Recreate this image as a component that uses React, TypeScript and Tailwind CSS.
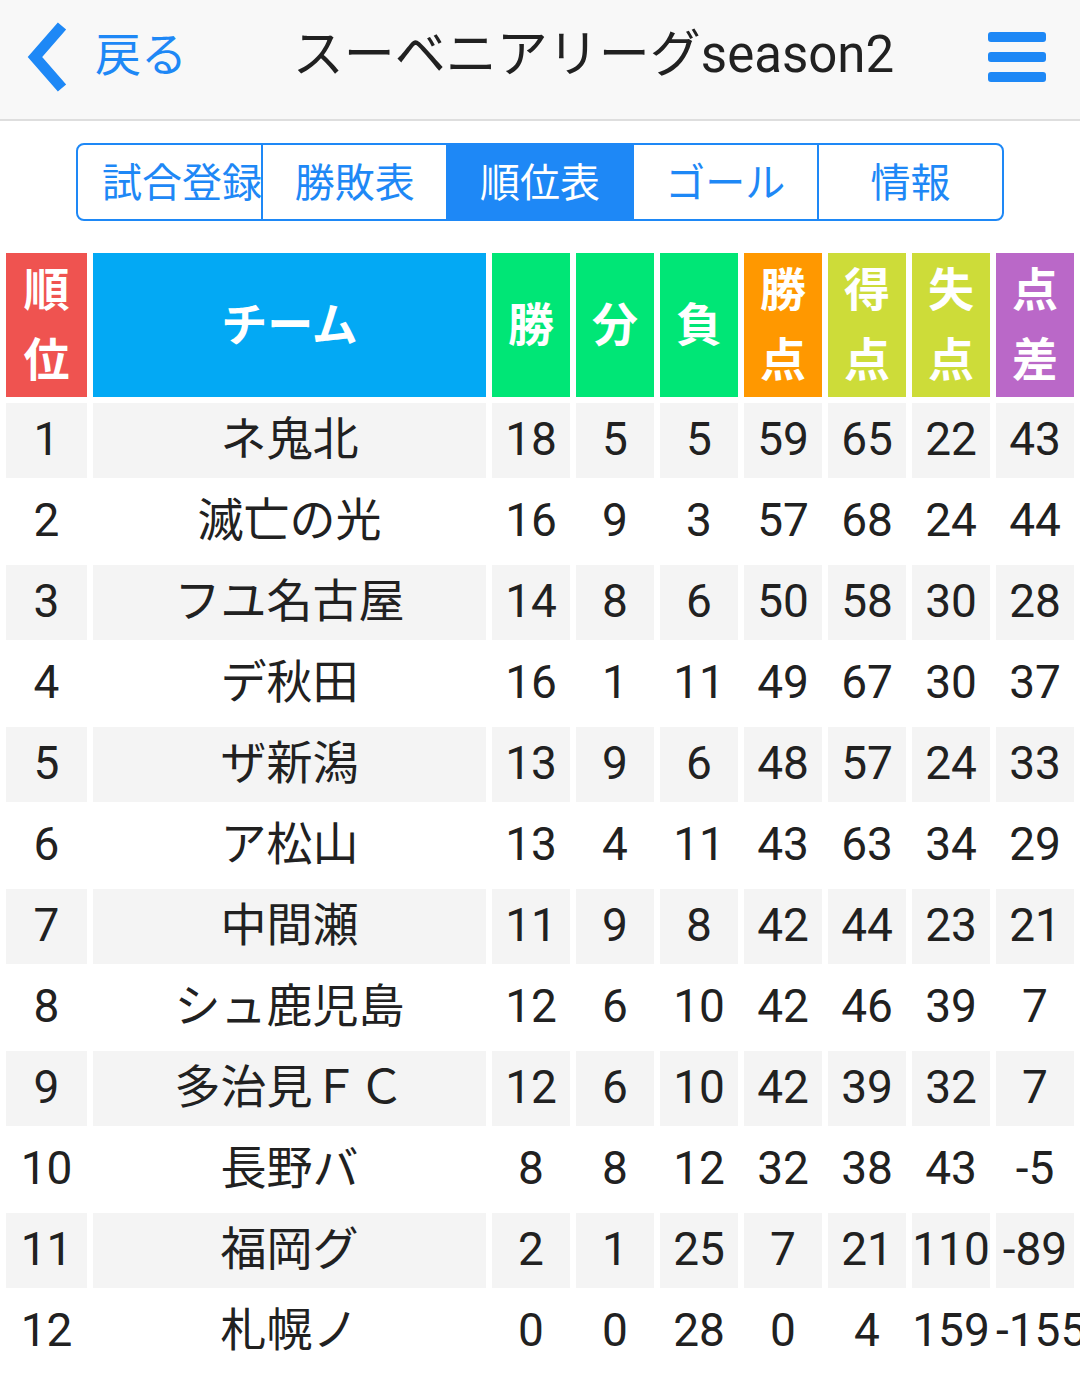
import React from "react";

const rows: [number, string, string, string, string, string, string, string, string][] = [
  [1, "ネ鬼北", "18", "5", "5", "59", "65", "22", "43"],
  [2, "滅亡の光", "16", "9", "3", "57", "68", "24", "44"],
  [3, "フユ名古屋", "14", "8", "6", "50", "58", "30", "28"],
  [4, "デ秋田", "16", "1", "11", "49", "67", "30", "37"],
  [5, "ザ新潟", "13", "9", "6", "48", "57", "24", "33"],
  [6, "ア松山", "13", "4", "11", "43", "63", "34", "29"],
  [7, "中間瀬", "11", "9", "8", "42", "44", "23", "21"],
  [8, "シュ鹿児島", "12", "6", "10", "42", "46", "39", "7"],
  [9, "多治見ＦＣ", "12", "6", "10", "42", "39", "32", "7"],
  [10, "長野バ", "8", "8", "12", "32", "38", "43", "-5"],
  [11, "福岡グ", "2", "1", "25", "7", "21", "110", "-89"],
  [12, "札幌ノ", "0", "0", "28", "0", "4", "159", "-155"],
];

const tabs = ["試合登録", "勝敗表", "順位表", "ゴール", "情報"];

const headers: { label: React.ReactNode; bg: string }[] = [
  { label: <>順<br />位</>, bg: "bg-[#ef5350]" },
  { label: "チーム", bg: "bg-[#03a9f4]" },
  { label: "勝", bg: "bg-[#00e676]" },
  { label: "分", bg: "bg-[#00e676]" },
  { label: "負", bg: "bg-[#00e676]" },
  { label: <>勝<br />点</>, bg: "bg-[#ff9800]" },
  { label: <>得<br />点</>, bg: "bg-[#cddc39]" },
  { label: <>失<br />点</>, bg: "bg-[#cddc39]" },
  { label: <>点<br />差</>, bg: "bg-[#ba68c8]" },
];

export default function App() {
  return (
    <div className="min-h-screen overflow-hidden bg-white font-['Roboto','Noto_Sans_CJK_JP',sans-serif] text-[#212121]">
      <header className="flex h-[121px] items-center border-b-2 border-[#dedede] bg-[#f8f8f8] pb-[10px] pl-[26px] pr-[34px]">
        <div className="flex items-center">
          <svg width="44" height="70" viewBox="0 0 44 70" className="mt-[4px]">
            <polyline
              points="36,4 9,35 36,66"
              fill="none"
              stroke="#1e88f6"
              strokeWidth="11"
              strokeLinejoin="miter"
              strokeLinecap="butt"
            />
          </svg>
          <span className="ml-[25px] text-[46px] leading-none text-[#1e88f6]">戻る</span>
        </div>
        <h1 className="flex-1 pl-[12px] text-center text-[51px] leading-none">
          スーベニアリーグseason2
        </h1>
        <div className="mt-[4px] flex flex-col gap-[10px]">
          <span className="h-[10px] w-[58px] rounded-[3px] bg-[#1e88f6]" />
          <span className="h-[10px] w-[58px] rounded-[3px] bg-[#1e88f6]" />
          <span className="h-[10px] w-[58px] rounded-[3px] bg-[#1e88f6]" />
        </div>
      </header>

      <nav className="mx-auto mt-[22px] flex h-[78px] w-[928px] overflow-hidden rounded-[8px] border-2 border-[#1e88f6]">
        {tabs.map((t, i) => (
          <div
            key={t}
            className={`w-0 min-w-0 flex-1 whitespace-nowrap px-[24px] text-center text-[40px] leading-[78px] ${
              i > 0 ? "border-l-2 border-[#1e88f6]" : ""
            } ${i === 2 ? "bg-[#1e88f6] text-white" : "text-[#1e88f6]"}`}
          >
            {t}
          </div>
        ))}
      </nav>

      <div className="mt-[26px] grid grid-cols-[81px_393px_repeat(7,78px)] gap-[6px] p-[6px]">
        {headers.map((h, i) => (
          <div
            key={i}
            className={`flex h-[144px] items-center justify-center text-center text-[46px] font-bold leading-[70px] text-white ${h.bg}`}
          >
            <span>{h.label}</span>
          </div>
        ))}
        {rows.map((r, ri) =>
          r.map((c, ci) => (
            <div
              key={`${ri}-${ci}`}
              className={`flex h-[75px] items-center whitespace-nowrap text-[46px] leading-none ${
                ri % 2 === 0 ? "bg-[#f4f4f4]" : "bg-white"
              }`}
            >
              <span className="mt-[-4px] w-full text-center">{c}</span>
            </div>
          ))
        )}
      </div>
    </div>
  );
}
